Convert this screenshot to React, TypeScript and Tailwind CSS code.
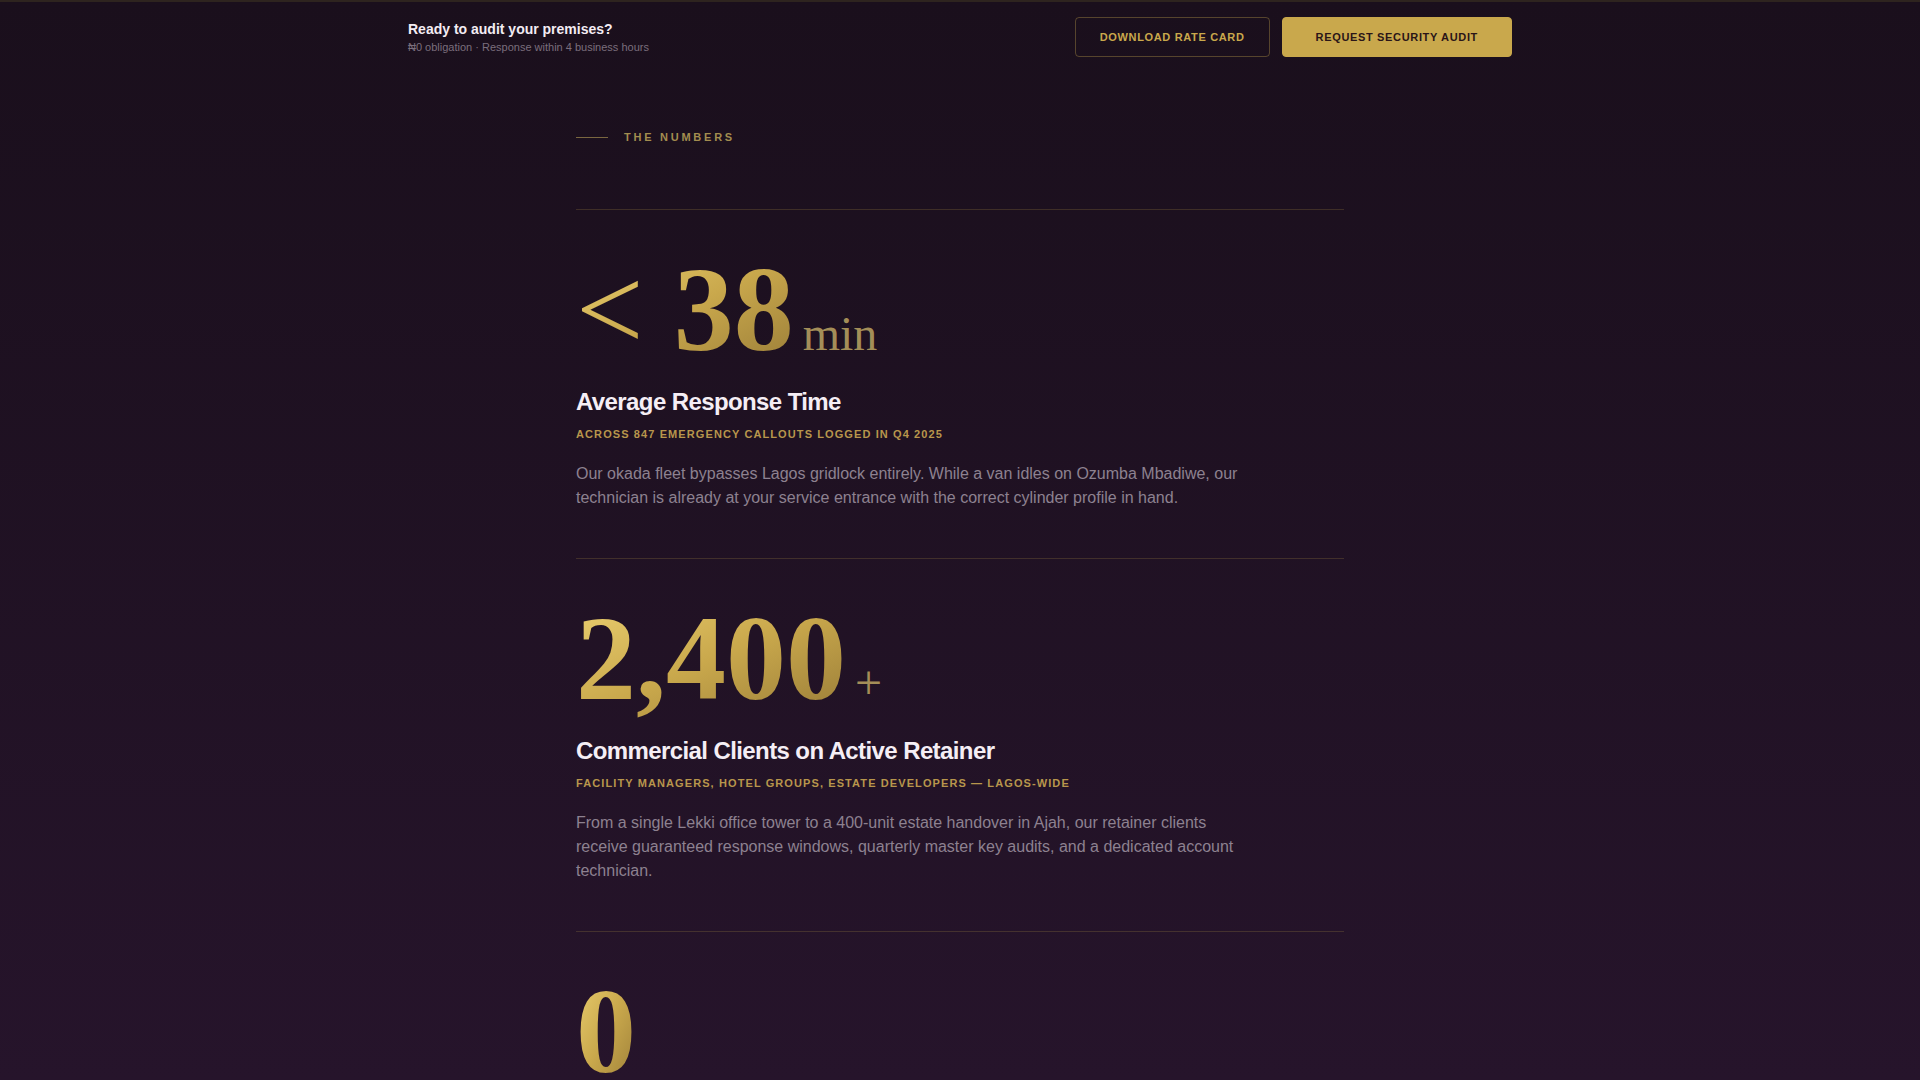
import React from 'react';

type Stat = {
  prefix?: string;
  value: string;
  suffix?: string;
  title: string;
  meta: string;
  body: string;
};

const stats: Stat[] = [
  {
    prefix: '<',
    value: '38',
    suffix: 'min',
    title: 'Average Response Time',
    meta: 'Across 847 emergency callouts logged in Q4 2025',
    body: 'Our okada fleet bypasses Lagos gridlock entirely. While a van idles on Ozumba Mbadiwe, our technician is already at your service entrance with the correct cylinder profile in hand.',
  },
  {
    value: '2,400',
    suffix: '+',
    title: 'Commercial Clients on Active Retainer',
    meta: 'Facility managers, hotel groups, estate developers — Lagos-wide',
    body: 'From a single Lekki office tower to a 400-unit estate handover in Ajah, our retainer clients receive guaranteed response windows, quarterly master key audits, and a dedicated account technician.',
  },
  {
    value: '0',
    title: 'Forced-Entry Breaches on Audited Sites',
    meta: 'Every premises we have secured since 2019',
    body: 'Each audit ends with a written hardware schedule, restricted key control and a follow-up inspection, so the locks we fit stay the weakest point nobody can find.',
  },
];

const StatBlock: React.FC<{ stat: Stat }> = ({ stat }) => (
  <section className="border-t border-[#c9a84c]/20 pt-10 pb-12">
    <div className="flex items-baseline font-['Liberation_Serif','Times_New_Roman',serif] text-[120px] leading-none">
      <span className="bg-linear-to-br from-[#ecd070] via-[#c9a84c] to-[#9a7d38] bg-clip-text font-bold text-transparent">
        {stat.prefix && <span className="font-normal">{stat.prefix} </span>}
        {stat.value}
      </span>
      {stat.suffix && (
        <span className="ml-[9px] text-5xl leading-none text-[#a48e58]">{stat.suffix}</span>
      )}
    </div>
    <h3 className="mt-4 text-2xl font-bold leading-8 tracking-tight text-[#f5eef5]">{stat.title}</h3>
    <p className="mt-2 text-[11px] font-bold uppercase leading-4 tracking-widest text-[#b8964c]">{stat.meta}</p>
    <p className="mt-5 max-w-2xl text-base leading-6 text-[#8d8190]">{stat.body}</p>
  </section>
);

export default function App() {
  return (
    <div className="min-h-screen bg-[#1d111f] bg-linear-to-b from-[#1a0f1c] to-[#26142b] bg-fixed font-['Liberation_Sans',Arial,sans-serif]">
      <header className="border-t-2 border-[#2e241f]">
        <div className="mx-auto flex max-w-6xl items-center justify-between px-6 pt-[15px] pb-4">
          <div>
            <p className="text-sm font-bold leading-5 text-[#f3ecf3]">Ready to audit your premises?</p>
            <p className="text-[11px] leading-4 text-[#7a6e7c]">₦0 obligation · Response within 4 business hours</p>
          </div>
          <div className="flex items-center gap-3">
            <button className="rounded-sm border border-[#c9a84c]/35 px-6 py-3 text-[11px] font-bold leading-[14px] tracking-[0.06em] text-[#c9a84c]">
              DOWNLOAD RATE CARD
            </button>
            <button className="rounded-sm border border-[#c9a84c] bg-[#c9a84c] px-[33px] py-3 text-[11px] font-bold leading-[14px] tracking-[0.06em] text-[#2a1518]">
              REQUEST SECURITY AUDIT
            </button>
          </div>
        </div>
      </header>

      <main className="mx-auto max-w-3xl pt-[56px] pb-24">
        <div className="mb-16 flex items-center gap-4">
          <span className="h-px w-8 bg-[#a38d4f]/70" />
          <span className="text-[11px] font-bold uppercase leading-4 tracking-[0.25em] text-[#a38d4f]">The Numbers</span>
        </div>
        {stats.map((s) => (
          <StatBlock key={s.title} stat={s} />
        ))}
      </main>
    </div>
  );
}
